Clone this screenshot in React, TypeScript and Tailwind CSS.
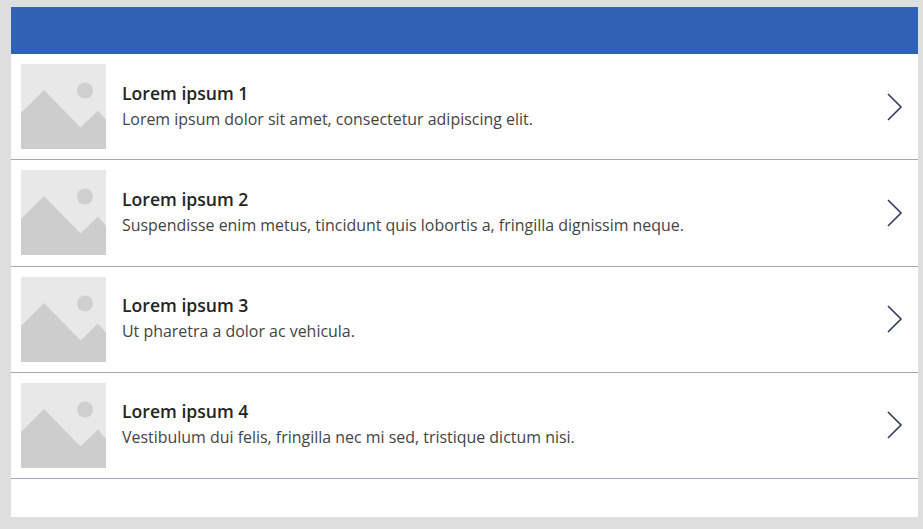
const rows = [
  { title: "Lorem ipsum 1", text: "Lorem ipsum dolor sit amet, consectetur adipiscing elit." },
  { title: "Lorem ipsum 2", text: "Suspendisse enim metus, tincidunt quis lobortis a, fringilla dignissim neque." },
  { title: "Lorem ipsum 3", text: "Ut pharetra a dolor ac vehicula." },
  { title: "Lorem ipsum 4", text: "Vestibulum dui felis, fringilla nec mi sed, tristique dictum nisi." },
];

const Placeholder = () => (
  <svg width="85" height="85" viewBox="0 0 85 85" className="shrink-0">
    <rect width="85" height="85" fill="#e8e8e8" />
    <circle cx="64" cy="26.5" r="8" fill="#cfcfcf" />
    <path d="M0 49 L23 26 L59.5 63.5 L77 46.5 L85 56 V85 H0 Z" fill="#cdcdcd" />
  </svg>
);

export default function App() {
  return (
    <div className="h-[529px] w-[923px] overflow-hidden bg-[#dedede] pt-[7px] pl-[11px] pr-[5px] pb-3 font-['Open_Sans',sans-serif]">
      <div className="flex h-full flex-col bg-white">
        <div className="h-[47px] shrink-0 bg-[#3161b3]" />
        {rows.map((row) => (
          <div key={row.title} className="flex h-[106.25px] shrink-0 items-center border-b border-[#a3a6b8] pl-[10px] pr-[14px]">
            <Placeholder />
            <div className="ml-[16px] min-w-0 flex-1 pb-[2px]">
              <div className="text-[17.6px] leading-[26px] font-semibold text-[#252525]">{row.title}</div>
              <div className="text-[15.95px] leading-[26px] text-[#444444]">{row.text}</div>
            </div>
            <svg width="18" height="28" viewBox="0 0 18 28" fill="none" className="shrink-0">
              <path d="M2 1 L15 14 L2 27" stroke="#333a5c" strokeWidth="1.6" />
            </svg>
          </div>
        ))}
      </div>
    </div>
  );
}
